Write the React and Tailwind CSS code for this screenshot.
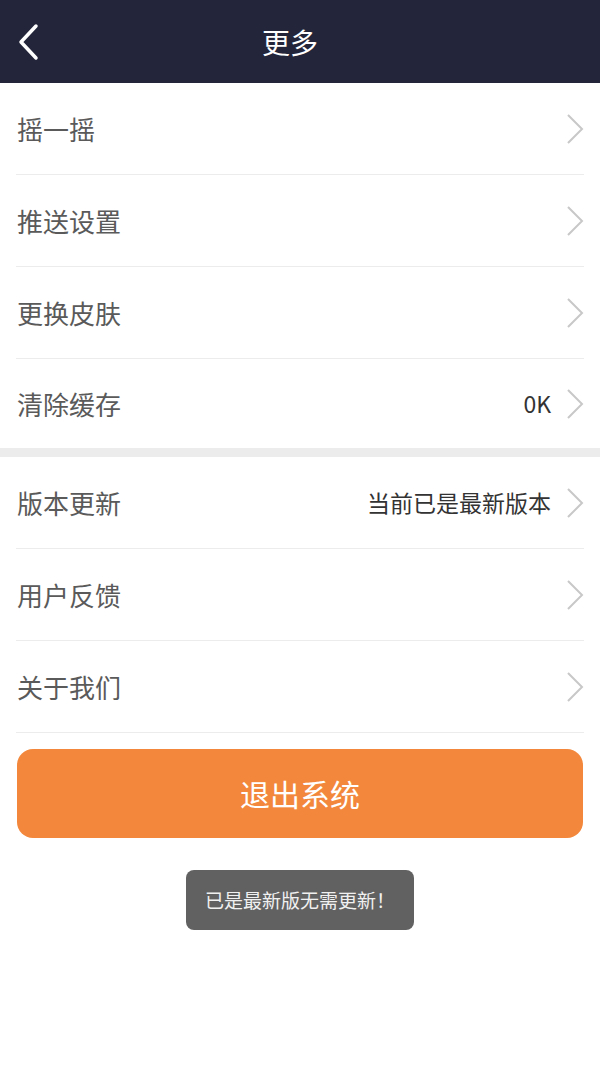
import React from "react";

const font = { fontFamily: '"Noto Sans CJK SC", "Noto Sans", sans-serif' };

function Chevron() {
  return (
    <svg width="18" height="32" viewBox="0 0 18 32" className="shrink-0">
      <path d="M2 2 L16 16 L2 30" fill="none" stroke="#c8c8c8" strokeWidth="2" strokeLinejoin="miter" />
    </svg>
  );
}

function Row({ label, value, last }) {
  return (
    <div className="px-4">
      <div className={`flex items-center justify-between ${last ? "h-[89px]" : "h-[92px] border-b border-[#ececec]"}`}>
        <span className="text-[26px] text-[#5a5a5a] pl-[1px]">{label}</span>
        <div className="flex items-center gap-[15px]">
          {value && <span className="text-[23px] text-[#333]">{value}</span>}
          <Chevron />
        </div>
      </div>
    </div>
  );
}

export default function App() {
  return (
    <div className="relative w-[600px] h-[1067px] bg-white" style={font}>
      <div className="relative flex h-[83px] items-center justify-center bg-[#23263a]">
        <svg className="absolute left-[15px] top-[23px]" width="26" height="38" viewBox="0 0 26 38">
          <path d="M21 3 L6 19 L21 35" fill="none" stroke="#fff" strokeWidth="3.5" strokeLinecap="round" strokeLinejoin="round" />
        </svg>
        <span className="mr-[20px] text-[28px] text-white">更多</span>
      </div>
      <Row label="摇一摇" />
      <Row label="推送设置" />
      <Row label="更换皮肤" />
      <Row label="清除缓存" value="0K" last />
      <div className="h-[9px] bg-[#ececec]" />
      <Row label="版本更新" value="当前已是最新版本" />
      <Row label="用户反馈" />
      <Row label="关于我们" />
      <div className="px-[17px] pt-[16px]">
        <div className="flex h-[89px] items-center justify-center rounded-[16px] bg-[#f3883c]">
          <span className="text-[30px] text-white">退出系统</span>
        </div>
      </div>
      <div className="flex justify-center pt-[32px]">
        <div className="flex h-[60px] w-[228px] items-center justify-center rounded-[8px] bg-[#616161]">
          <span className="text-[19px] text-[#f0f0f0]">已是最新版无需更新！</span>
        </div>
      </div>
    </div>
  );
}
